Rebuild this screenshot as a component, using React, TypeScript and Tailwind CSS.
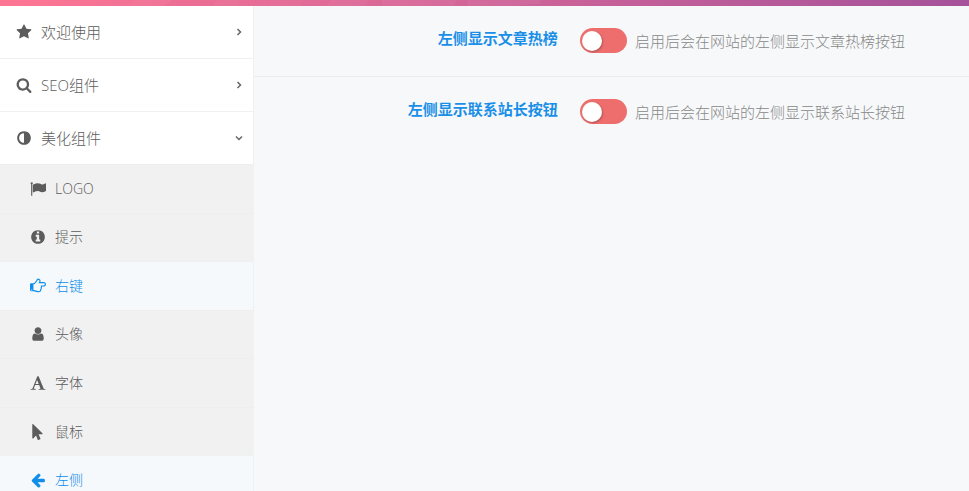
import { useState } from "react";

const disc =
  "M1664 896q0 209-103 385.5t-279.5 279.5-385.5 103-385.5-103-279.5-279.5-103-385.5 103-385.5 279.5-279.5 385.5-103 385.5 103 279.5 279.5 103 385.5z";

const paths = {
  star: "M1728 647q0 22-26 48l-363 354 86 500q1 7 1 20 0 21-10.5 35.5t-30.5 14.5q-19 0-40-12l-449-236-449 236q-22 12-40 12-21 0-31.5-14.5t-10.5-35.5q0-6 2-20l86-500-364-354q-25-27-25-48 0-37 56-46l502-73 225-455q19-41 49-41t49 41l225 455 502 73q56 9 56 46z",
  search:
    "M1216 832q0-185-131.5-316.5t-316.5-131.5-316.5 131.5-131.5 316.5 131.5 316.5 316.5 131.5 316.5-131.5 131.5-316.5zm512 832q0 52-38 90t-90 38q-54 0-90-38l-343-342q-179 124-399 124-143 0-273.5-55.5t-225-150-150-225-55.5-273.5 55.5-273.5 150-225 225-150 273.5-55.5 273.5 55.5 225 150 150 225 55.5 273.5q0 220-124 399l343 343q37 37 37 90z",
  adjust: "M896 1440v-1088q-148 0-273 73t-198 198-73 273 73 273 198 198 273 73z" + disc,
  flag: "M320 256q0 72-64 110v1266q0 13-9.5 22.5t-22.5 9.5h-64q-13 0-22.5-9.5t-9.5-22.5v-1266q-64-38-64-110 0-53 37.5-90.5t90.5-37.5 90.5 37.5 37.5 90.5zm1472 64v763q0 25-12.5 38.5t-39.5 27.5q-215 116-369 116-61 0-123.5-22t-108.5-48-115.5-48-142.5-22q-192 0-464 146-17 9-33 9-26 0-45-19t-19-45v-742q0-32 31-55 21-14 79-43 236-120 421-120 107 0 200 29t219 88q38 19 88 19 54 0 117.5-21t110-47 88-47 54.5-21q26 0 45 19t19 45z",
  info:
    "M1152 1376v-160q0-14-9-23t-23-9h-96v-512q0-14-9-23t-23-9h-320q-14 0-23 9t-9 23v160q0 14 9 23t23 9h96v320h-96q-14 0-23 9t-9 23v160q0 14 9 23t23 9h448q14 0 23-9t9-23zm-128-896v-160q0-14-9-23t-23-9h-192q-14 0-23 9t-9 23v160q0 14 9 23t23 9h192q14 0 23-9t9-23z" +
    disc,
  hand: "M256 1344q0-26-19-45t-45-19-45 19-19 45 19 45 45 19 45-19 19-45zm1408-640q0-51-39-89.5t-89-38.5h-576q0-20 15-48.5t33-55 33-68 15-84.5q0-67-44.5-97.5t-115.5-30.5q-24 24-90 139-24 44-37 65-40 64-112 145-71 81-101 106-69 57-140 57h-32v640h32q72 0 167 32t193.5 64 179.5 32q189 0 189-167 0-26-5-56 30-16 47.5-52.5t17.5-73.5-18-69q53-50 53-119 0-25-10-55.5t-25-47.5h331q52 0 90-38t38-90zm128-1q0 105-75.5 181t-180.5 76h-169q-4 62-37 119 3 21 3 43 0 101-60 178 1 139-85 219.5t-227 80.5q-133 0-322-69-164-59-223-59h-288q-53 0-90.5-37.5t-37.5-90.5v-640q0-53 37.5-90.5t90.5-37.5h288q10 0 21.5-4.5t23.5-14 22.5-18 24-22.5 20.5-21.5 19-21.5 14-17q65-74 100-129 13-21 33-62t37-72 40.5-63 55-49.5 69.5-17.5q125 0 206.5 67t81.5 189q0 68-22 128h374q104 0 180 76t76 179z",
  user: "M1536 1399q0 109-62.5 187t-150.5 78h-854q-88 0-150.5-78t-62.5-187q0-85 8.5-160.5t31.5-152 58.5-131 94-89 134.5-34.5q131 128 313 128t313-128q76 0 134.5 34.5t94 89 58.5 131 31.5 152 8.5 160.5zm-256-887q0 159-112.5 271.5t-271.5 112.5-271.5-112.5-112.5-271.5 112.5-271.5 271.5-112.5 271.5 112.5 112.5 271.5z",
  font: "M789 559l-170 450q33 0 136.5 2t160.5 2q19 0 57-2-87-253-184-452zm-725 1105l2-79q23-7 56-12.5t57-10.5 49.5-14.5 44.5-29 31-50.5l237-616 280-724h128q8 14 11 21l205 480q33 78 106 257.5t114 274.5q15 34 58 144.5t72 168.5q20 45 35 57 19 15 88 29.5t84 20.5q6 38 6 57 0 4-.5 13t-.5 13q-63 0-190-8t-191-8q-76 0-215 7t-178 8q0-43 4-78l131-28q1 0 12.5-2.5t15.5-3.5 14.5-4.5 15-6.5 11-8 9-11 2.5-14q0-16-31-96.5t-72-177.5-42-100l-450-2q-26 58-76.5 195.5t-50.5 162.5q0 22 14 37.5t43.5 24.5 48.5 13.5 57 8.5 41 4q1 19 1 58 0 9-2 27-58 0-174.5-10t-174.5-10q-8 0-26.5 4t-21.5 4q-80 14-188 14z",
  pointer:
    "M1389 1043q31 30 14 69-17 40-59 40h-382l201 476q10 25 0 49t-34 35l-177 75q-25 10-49 0t-35-34l-191-452-312 312q-19 19-45 19-12 0-24-5-40-17-40-59v-1504q0-42 40-59 12-5 24-5 27 0 45 19z",
  arrow:
    "M1664 896v128q0 53-32.5 90.5t-84.5 37.5h-704l293 294q38 36 38 90t-38 90l-75 76q-37 37-90 37-52 0-91-37l-651-652q-37-37-37-90 0-52 37-91l651-650q38-38 91-38 52 0 90 38l75 74q38 38 38 91t-38 91l-293 293h704q52 0 84.5 37.5t32.5 90.5z",
};

type IconName = keyof typeof paths;

function Icon({ name }: { name: IconName }) {
  return (
    <svg viewBox="0 0 1792 1792" className="size-4 shrink-0 fill-current" fillRule="evenodd" aria-hidden="true">
      <path d={paths[name]} />
    </svg>
  );
}

function Chevron({ open }: { open: boolean }) {
  return (
    <svg viewBox="0 0 10 10" className="size-2.5 shrink-0 fill-none stroke-[#666] stroke-[1.5]" aria-hidden="true">
      <path d={open ? "M2 3.5 5 6.5 8 3.5" : "M3.5 2 6.5 5 3.5 8"} />
    </svg>
  );
}

const sections: { icon: IconName; label: string; open: boolean }[] = [
  { icon: "star", label: "欢迎使用", open: false },
  { icon: "search", label: "SEO组件", open: false },
  { icon: "adjust", label: "美化组件", open: true },
];

const pages: { icon: IconName; label: string; active?: boolean }[] = [
  { icon: "flag", label: "LOGO" },
  { icon: "info", label: "提示" },
  { icon: "hand", label: "右键", active: true },
  { icon: "user", label: "头像" },
  { icon: "font", label: "字体" },
  { icon: "pointer", label: "鼠标" },
  { icon: "arrow", label: "左侧", active: true },
];

function Banner() {
  return (
    <header className="h-1.5 shrink-0 bg-linear-to-r from-[#ff7693] to-[#a5529a]">
      <svg viewBox="0 0 969 6" preserveAspectRatio="none" className="block h-full w-full" aria-hidden="true">
        <path d="M135 0H172L165 6H127Z" fill="#fff" fillOpacity=".03" />
        <path d="M172 0H217L213 6H165Z" fill="#b0307a" fillOpacity=".03" />
        <path d="M217 0H241L238 6H213Z" fill="#fff" fillOpacity=".03" />
        <path d="M270 0H303L300 6H270Z" fill="#fff" fillOpacity=".02" />
        <path d="M331 0H368L365 6H326Z" fill="#fff" fillOpacity=".04" />
        <path d="M382 0H457L453 6H382Z" fill="#fff" fillOpacity=".04" />
        <path d="M468 0H541L539 4L510 6H467Z" fill="#fff" fillOpacity=".04" />
      </svg>
    </header>
  );
}

function Sidebar() {
  return (
    <nav className="w-[254px] shrink-0 border-r border-[#f0f1f3] font-light text-[#5c5c5c]">
      <div className="divide-y divide-[#f0f0f0]">
        {sections.map((s) => (
          <button
            key={s.label}
            type="button"
            aria-expanded={s.open}
            className="flex w-full items-center gap-[9px] bg-white py-3.5 pr-[9px] pl-4 text-left text-[15px] leading-6"
          >
            <Icon name={s.icon} />
            <span className="flex-1">{s.label}</span>
            <Chevron open={s.open} />
          </button>
        ))}
      </div>
      <ul className="grid h-[340px] auto-rows-fr">
        {pages.map((p) => (
          <li key={p.label}>
            <a
              href="#"
              className={
                p.active
                  ? "flex h-full items-center gap-[9px] border-t border-[#eff0f1] bg-[#f6f9fc] pl-[30px] text-sm text-[#0e8ee9]"
                  : "flex h-full items-center gap-[9px] border-t border-[#eeeeee] bg-[#f1f1f1] pl-[30px] text-sm"
              }
            >
              <Icon name={p.icon} />
              <span>{p.label}</span>
            </a>
          </li>
        ))}
      </ul>
    </nav>
  );
}

function SettingRow({ id, title, help }: { id: string; title: string; help: string }) {
  const [on, setOn] = useState(false);
  return (
    <div className="grid grid-cols-[17fr_23fr] border-b border-[#ebedf0] pt-[22px] pb-[23px] text-[15px] leading-6 last:border-transparent">
      <label htmlFor={id} className="-mt-0.5 text-right font-bold text-[#1a8fe8]">
        {title}
      </label>
      <div className="flex items-center gap-2 pl-[22px]">
        <input
          id={id}
          type="checkbox"
          role="switch"
          checked={on}
          onChange={() => setOn(!on)}
          className="flex h-[25px] w-[47px] shrink-0 cursor-pointer appearance-none items-center rounded-full bg-[#ee6e6e] px-0.5 before:size-5 before:rounded-full before:bg-white before:shadow-[1px_1px_2px_rgba(0,0,0,0.25)] checked:justify-end checked:bg-[#4fb07a]"
        />
        <span className="font-light text-[#888]">{help}</span>
      </div>
    </div>
  );
}

export default function App() {
  return (
    <div className="flex h-screen flex-col overflow-hidden bg-[#f7f8fa] font-['Open_Sans','Noto_Sans_CJK_SC',sans-serif]">
      <Banner />
      <div className="flex flex-1 items-start">
        <Sidebar />
        <main className="min-w-0 flex-1">
          <SettingRow id="hot-posts" title="左侧显示文章热榜" help="启用后会在网站的左侧显示文章热榜按钮" />
          <SettingRow id="contact" title="左侧显示联系站长按钮" help="启用后会在网站的左侧显示联系站长按钮" />
        </main>
      </div>
    </div>
  );
}
